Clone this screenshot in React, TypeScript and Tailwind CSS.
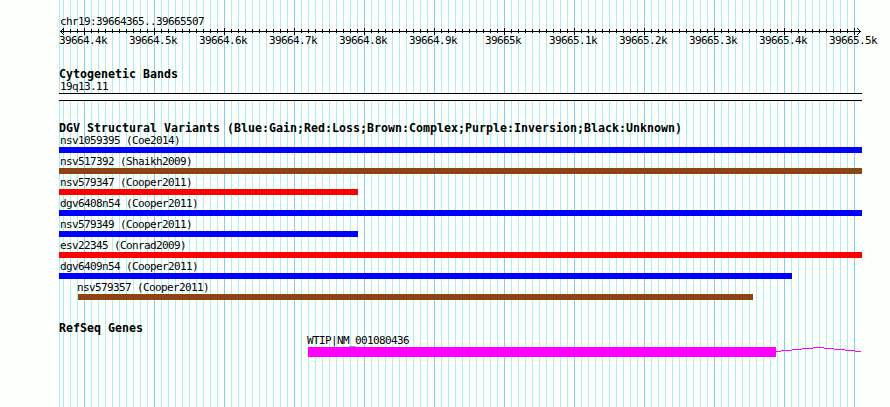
interface Variant {
  name: string;
  start: number;
  end: number;
  color: string;
}

const LEFT = 59;
const RIGHT = 862;

const TICKS = [
  "39664.4k",
  "39664.5k",
  "39664.6k",
  "39664.7k",
  "39664.8k",
  "39664.9k",
  "39665k",
  "39665.1k",
  "39665.2k",
  "39665.3k",
  "39665.4k",
  "39665.5k",
];

const VARIANTS: Variant[] = [
  { name: "nsv1059395 (Coe2014)", start: 59, end: 862, color: "bg-[#0000ff]" },
  { name: "nsv517392 (Shaikh2009)", start: 59, end: 862, color: "bg-[#8b4513]" },
  { name: "nsv579347 (Cooper2011)", start: 59, end: 358, color: "bg-[#ff0000]" },
  { name: "dgv6408n54 (Cooper2011)", start: 59, end: 862, color: "bg-[#0000ff]" },
  { name: "nsv579349 (Cooper2011)", start: 59, end: 358, color: "bg-[#0000ff]" },
  { name: "esv22345 (Conrad2009)", start: 59, end: 862, color: "bg-[#ff0000]" },
  { name: "dgv6409n54 (Cooper2011)", start: 59, end: 792, color: "bg-[#0000ff]" },
  { name: "nsv579357 (Cooper2011)", start: 78, end: 753, color: "bg-[#8b4513]" },
];

// minor lines every 7px, a major one every tenth
const LINES = Array.from({ length: 114 }, (_, i) => ({
  x: 63 + i * 7,
  major: i % 10 === 3,
}));

// intron connector, one entry per pixel row: [x, y, width]
const INTRON = [
  [0, 4, 5],
  [5, 3, 11],
  [16, 2, 10],
  [26, 1, 11],
  [37, 0, 11],
  [48, 1, 10],
  [58, 2, 11],
  [69, 3, 10],
  [79, 4, 6],
];

function Grid() {
  return (
    <svg
      className="absolute inset-0"
      width="890"
      height="407"
      shapeRendering="crispEdges"
      aria-hidden="true"
    >
      <rect x={LEFT} width="1" height="407" fill="#afeeee" />
      {LINES.map(({ x, major }) => (
        <rect
          key={x}
          x={x}
          width="1"
          height="407"
          fill={major ? "#87ceeb" : "#afeeee"}
        />
      ))}
    </svg>
  );
}

function Ruler() {
  return (
    <svg
      className="ml-[59px] block"
      width="803"
      height="7"
      shapeRendering="crispEdges"
      aria-hidden="true"
    >
      <rect x="1" y="3" width="801" height="1" />
      {LINES.map(({ x, major }) => (
        <rect
          key={x}
          x={x - LEFT}
          y={major ? 0 : 1}
          width="1"
          height={major ? 7 : 4}
        />
      ))}
      {[1, 2, 3].map((d) => (
        <g key={d}>
          <rect x={1 + d} y={3 - d} width="1" height="1" />
          <rect x={1 + d} y={3 + d} width="1" height="1" />
          <rect x={801 - d} y={3 - d} width="1" height="1" />
          <rect x={801 - d} y={3 + d} width="1" height="1" />
        </g>
      ))}
    </svg>
  );
}

function Heading({ children }: { children: string }) {
  return (
    <h2 className="ml-[59px] h-3 text-[11.63px] leading-3 font-bold">
      {children}
    </h2>
  );
}

export default function App() {
  return (
    <main className="relative h-[407px] w-[890px] overflow-hidden bg-[#fdfffc] font-['DejaVu_Sans_Mono',monospace] text-[11px] leading-3 tracking-[-0.622px] whitespace-pre text-black">
      <Grid />
      <div className="relative flex flex-col pt-4">
        <div className="ml-[60px] h-3">chr19:39664365..39665507</div>
        <Ruler />
        <div className="ml-[48px] flex h-[33px] w-[840px]">
          {TICKS.map((tick) => (
            <span key={tick} className="w-[70px] shrink-0 text-center">
              {tick}
            </span>
          ))}
        </div>

        <section className="tracking-normal">
          <Heading>Cytogenetic Bands</Heading>
          <div className="ml-[60px] h-[13px] pt-px tracking-[-0.622px]">19q13.11</div>
          <div className="ml-[59px] h-2 w-[803px] border-y border-black bg-[#fdfffc]" />
        </section>

        <section className="mt-[21px] tracking-normal">
          <Heading>
            DGV Structural Variants (Blue:Gain;Red:Loss;Brown:Complex;Purple:Inversion;Black:Unknown)
          </Heading>
          {VARIANTS.map(({ name, start, end, color }) => (
            <div key={name} className="h-[21px]" style={{ marginLeft: start }}>
              <div
                className={`h-[13px] pt-px tracking-[-0.622px] ${start === LEFT ? "pl-px" : "-ml-px"}`}
              >
                {name}
              </div>
              <div className={`h-1.5 ${color}`} style={{ width: end - start }} />
            </div>
          ))}
        </section>

        <section className="mt-5 tracking-normal">
          <Heading>RefSeq Genes</Heading>
          <div className="ml-[308px] tracking-[-0.622px]">
            <div className="-ml-px h-[13px] pt-px">WTIP|NM_001080436</div>
            <div className="flex">
              <div className="h-2.5 w-[468px] bg-[#ff00ff]" />
              <svg
                width={RIGHT - 776}
                height="10"
                shapeRendering="crispEdges"
                fill="#ff00ff"
                aria-hidden="true"
              >
                {INTRON.map(([x, y, w]) => (
                  <rect key={x} x={x} y={y} width={w} height="1" />
                ))}
              </svg>
            </div>
          </div>
        </section>
      </div>
    </main>
  );
}
